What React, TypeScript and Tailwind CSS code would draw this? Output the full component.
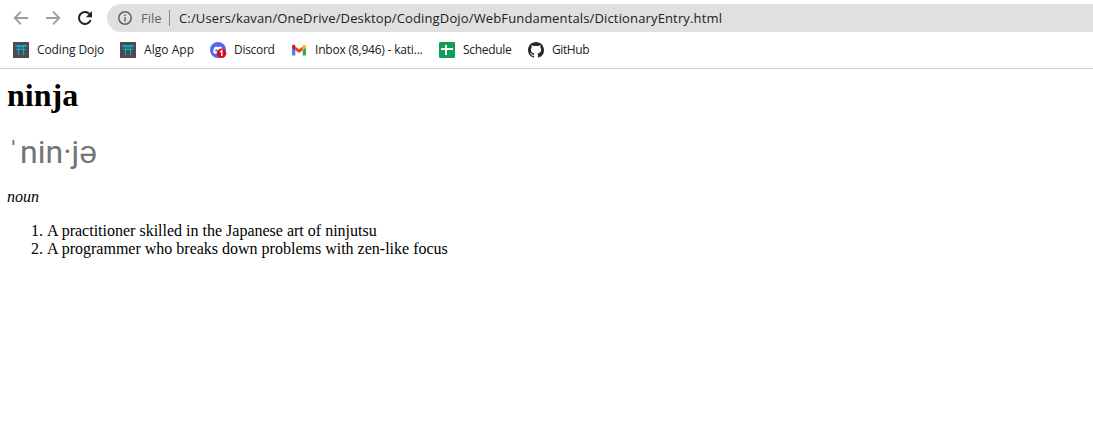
import React from "react";

function Torii() {
  return (
    <svg width="16" height="16" viewBox="0 0 16 16">
      <rect width="16" height="16" fill="#4d4b4c" />
      <path d="M2 3H14L13.4 5H2.6Z" fill="#1b9fd8" />
      <path d="M3 7.5H13" stroke="#1b9fd8" strokeWidth="1.1" />
      <path d="M5.5 5V13.2M10.5 5V13.2" stroke="#1b9fd8" strokeWidth="1.2" fill="none" />
      <path d="M8 5V7" stroke="#1b9fd8" strokeWidth="0.9" />
    </svg>
  );
}

function Discord() {
  return (
    <svg width="17" height="17" viewBox="0 0 17 17">
      <circle cx="8" cy="8" r="8" fill="#5865f2" />
      <path d="M3.2 10.8C3.2 8 4 6 4.8 5.2C5.7 4.6 6.5 4.5 6.8 4.5L7.2 5.1H9L9.4 4.5C10.3 4.6 11 4.9 11.5 5.2C12.4 6.4 12.9 8.4 12.9 10.8C12 11.6 11 11.8 10.5 11.8H5.7C4.8 11.7 3.8 11.3 3.2 10.8Z" fill="#fff" />
      <circle cx="6.3" cy="8.4" r="1.1" fill="#5865f2" />
      <circle cx="11.5" cy="11.3" r="4.8" fill="#d80c18" />
      <path d="M10.2 9.8L11.8 8.7V14" stroke="#fff" strokeWidth="1.4" fill="none" />
    </svg>
  );
}

function Gmail() {
  return (
    <svg width="16" height="16" viewBox="0 0 16 16">
      <path d="M1 4.5L4.3 7V13.5H2.1Q1 13.5 1 12.4Z" fill="#4285f4" />
      <path d="M15 4.5L11.7 7V13.5H13.9Q15 13.5 15 12.4Z" fill="#34a853" />
      <path d="M4.3 4.4L8 7.2L11.7 4.4V8.3L8 11.1L4.3 8.3Z" fill="#ea4335" />
      <path d="M1 4.3C1 2.7 2.6 2.3 3.7 3.1L4.3 3.6V8.3L1 5.8Z" fill="#c5221f" />
      <path d="M15 4.3C15 2.7 13.4 2.3 12.3 3.1L11.7 3.6V8.3L15 5.8Z" fill="#fbbc04" />
    </svg>
  );
}

function Sheet() {
  return (
    <svg width="16" height="16" viewBox="0 0 16 16">
      <rect width="16" height="16" rx="1.3" fill="#0f9d58" />
      <path d="M2 7H14M7 3V13" stroke="#fff" strokeWidth="2" fill="none" />
    </svg>
  );
}

function GitHub() {
  return (
    <svg width="16" height="16" viewBox="0 0 16 16" fill="#24292f">
      <path d="M8 0C3.58 0 0 3.58 0 8c0 3.54 2.29 6.53 5.47 7.59.4.07.55-.17.55-.38 0-.19-.01-.82-.01-1.49-2.01.37-2.53-.49-2.69-.94-.09-.23-.48-.94-.82-1.13-.28-.15-.68-.52-.01-.53.63-.01 1.08.58 1.23.82.72 1.21 1.87.87 2.33.66.07-.52.28-.87.51-1.07-1.78-.2-3.64-.89-3.64-3.95 0-.87.31-1.59.82-2.15-.08-.2-.36-1.02.08-2.12 0 0 .67-.21 2.2.82a7.6 7.6 0 0 1 4 0c1.53-1.04 2.2-.82 2.2-.82.44 1.1.16 1.92.08 2.12.51.56.82 1.27.82 2.15 0 3.07-1.87 3.75-3.65 3.95.29.25.54.73.54 1.48 0 1.07-.01 1.93-.01 2.2 0 .21.15.46.55.38A8.01 8.01 0 0 0 16 8c0-4.42-3.58-8-8-8z" />
    </svg>
  );
}

const bookmarks = [
  { label: "Coding Dojo", icon: <Torii />, box: "w-[107px]", text: "tracking-[-0.1px]" },
  { label: "Algo App", icon: <Torii />, box: "w-[90px]", text: "tracking-[0.05px]" },
  { label: "Discord", icon: <Discord />, box: "w-[81px]", text: "tracking-[-0.3px]" },
  { label: "Inbox (8,946) - kati...", icon: <Gmail />, box: "w-[148px]", text: "tracking-[-0.2px]" },
  { label: "Schedule", icon: <Sheet />, box: "w-[89px]", text: "tracking-[-0.3px]" },
  { label: "GitHub", icon: <GitHub />, box: "w-[80px]", text: "tracking-[-0.4px]" },
];

function Toolbar() {
  return (
    <div className="flex h-9 items-center pl-[13px]">
      <svg className="shrink-0" width="16" height="16" viewBox="0 0 16 16" fill="none" stroke="#9c9ea1" strokeWidth="1.9">
        <path d="M15 8H2.3M8 1.7L1.7 8L8 14.3" />
      </svg>
      <svg className="ml-4 shrink-0" width="16" height="16" viewBox="0 0 16 16" fill="none" stroke="#9c9ea1" strokeWidth="1.9">
        <path d="M1 8H13.7M8 1.7L14.3 8L8 14.3" />
      </svg>
      <svg className="ml-4 shrink-0" width="16" height="16" viewBox="0 0 16 16">
        <path d="M13.6 10.1A6 6 0 1 1 12.4 3.9" fill="none" stroke="#202124" strokeWidth="2" />
        <path d="M15 1V7.2H8.8Z" fill="#202124" />
      </svg>
      <div className="ml-[14px] flex h-7 flex-1 items-center rounded-l-full bg-[#e0e0e0] pl-[11px] text-[13px] whitespace-nowrap">
        <svg className="shrink-0" width="14" height="14" viewBox="0 0 14 14">
          <circle cx="7" cy="7" r="6.2" fill="none" stroke="#5f6368" strokeWidth="1.5" />
          <path d="M7 6.2V10.4M7 3.6V5" stroke="#5f6368" strokeWidth="1.5" />
        </svg>
        <span className="ml-[9px] w-[28px] pt-px text-[#5f6368]">File</span>
        <span className="h-4 w-px bg-[#8a8c8f]" />
        <span className="ml-[9px] pt-px tracking-[0.145px] text-[#202124]">
          C:/Users/kavan/OneDrive/Desktop/CodingDojo/WebFundamentals/DictionaryEntry.html
        </span>
      </div>
    </div>
  );
}

export default function App() {
  return (
    <div className="h-[430px] w-full overflow-hidden bg-white">
      <header className="h-[69px] border-b border-[#cbcbcb] font-['Open_Sans','Noto_Sans',sans-serif]">
        <Toolbar />
        <nav className="flex h-7 items-center pl-[13px] text-[12px] whitespace-nowrap text-[#202124]">
          {bookmarks.map((b) => (
            <div key={b.label} className={`flex shrink-0 items-center ${b.box}`}>
              <span className="w-6 shrink-0">{b.icon}</span>
              <span className={b.text}>{b.label}</span>
            </div>
          ))}
        </nav>
      </header>
      <main className="pl-[7px] font-['Liberation_Serif',serif] text-[16px] leading-[18px] text-black">
        <h1 className="pt-2 text-[32px] leading-9 font-bold">ninja</h1>
        <p className="mt-[21px] flex items-baseline font-['Roboto','Liberation_Sans',sans-serif] text-[32px] leading-9 text-[#70757a]">
          <span className="w-[13px] pl-px font-['Liberation_Sans',sans-serif]">ˈ</span>
          <span>nin·j</span>
          <span className="font-['Liberation_Sans',sans-serif]">ə</span>
        </p>
        <p className="mt-[18px] italic">noun</p>
        <ol className="mt-4 list-decimal pl-10">
          <li>A practitioner skilled in the Japanese art of ninjutsu</li>
          <li>A programmer who breaks down problems with zen-like focus</li>
        </ol>
      </main>
    </div>
  );
}
